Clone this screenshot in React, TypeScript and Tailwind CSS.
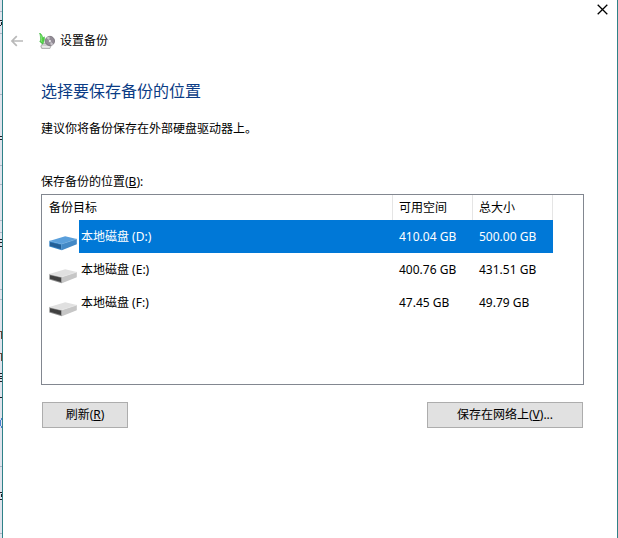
import { useState } from 'react';

// ── Data ───────────────────────────────────────────────────────────────────

type Drive = {
  id: string;
  name: string;
  free: string;
  total: string;
};

const DRIVES: Drive[] = [
  { id: 'D', name: '本地磁盘 (D:)', free: '410.04 GB', total: '500.00 GB' },
  { id: 'E', name: '本地磁盘 (E:)', free: '400.76 GB', total: '431.51 GB' },
  { id: 'F', name: '本地磁盘 (F:)', free: '47.45 GB', total: '49.79 GB' },
];

// ── Icons ──────────────────────────────────────────────────────────────────

function BackIcon() {
  return (
    <svg width="13" height="12" viewBox="0 0 13 12" fill="none" stroke="#b9b9b9" strokeWidth="1.7" aria-hidden="true">
      <path d="M12 6H1M5.8 1.2L1 6l4.8 4.8" />
    </svg>
  );
}

function CloseIcon() {
  return (
    <svg width="11" height="11" viewBox="0 0 11 11" fill="none" stroke="#000" strokeWidth="1.3" aria-hidden="true">
      <path d="M0.7 0.7l9.6 9.6M10.3 0.7L0.7 10.3" />
    </svg>
  );
}

function BackupIcon() {
  return (
    <svg width="16" height="16" viewBox="0 0 16 16" aria-hidden="true">
      <path d="M1.8 13.2l2-3h5l3 3-1 2.4H2.8z" fill="#cfcfcf" stroke="#8a8a8a" strokeWidth="0.6" />
      <path d="M2.8 13.3h8v1.3H3.3z" fill="#f4f4f4" />
      <circle cx="10.9" cy="8" r="4.7" fill="#938c96" stroke="#6b656e" strokeWidth="0.7" />
      <path d="M10.9 8L7.4 5a5 5 0 0 1 3-1.6zM10.9 8l3.5 3.1a5 5 0 0 1-2.6 1.5z" fill="#c8c4ca" />
      <circle cx="10.9" cy="8" r="1.5" fill="#f0edf1" stroke="#77717a" strokeWidth="0.5" />
      <path d="M0.5 0c2 1 3 2.6 3.2 5l1.7-1.2c.3 3-.3 5.4-1.8 7.4L0.6 8.4l.9-.4C1.7 5 1.4 2.4 0.5 0z" fill="#4fd043" stroke="#2fae34" strokeWidth="0.5" />
      <path d="M1.6 1.8c1 2 1.2 4 .9 6.4l.9 1" fill="none" stroke="#9cf084" strokeWidth="0.7" />
    </svg>
  );
}

function DriveIcon({ selected }: { selected: boolean }) {
  const c = selected
    ? { top: '#5a9fdb', side: '#4489c6', front: '#3584c6', slot: '#245f96', edge: '#6dabdf' }
    : { top: '#e0e0e0', side: '#c6c6c6', front: '#8c8c8c', slot: '#404040', edge: '#ececec' };

  return (
    <svg width="28" height="15" viewBox="0 0 28 15" className="shrink-0" aria-hidden="true">
      <path d="M0.3 5L16.2 0.3 27.8 3 12.8 7.9z" fill={c.top} />
      <path d="M12.8 7.9L27.8 3v5.2L12.8 14.2z" fill={c.side} />
      <path d="M0.3 5l12.5 2.9v6.3L0.3 10.6z" fill={c.front} />
      <path d="M1 6.2l11 2.6v4.1L1 9.8z" fill={c.slot} />
      <path d="M0.5 5l12.3 2.9L27.6 3.1" fill="none" stroke={c.edge} strokeWidth="0.6" />
    </svg>
  );
}

// Sliver of the window that lies behind the dialog
function WindowBehind() {
  return (
    <svg width="2" height="538" viewBox="0 0 2 538" className="w-[2px] shrink-0" shapeRendering="crispEdges" aria-hidden="true">
      <path d="M0 11h2v1H0zM0 33h2v1H0zM0 94h2v1H0zM0 165h2v1H0zM0 184h2v1H0zM0 220h2v1H0zM0 232h2v1H0zM0 289h2v1H0zM0 299h2v1H0zM0 466h2v1H0zM0 533h2v1H0z" fill="#aeb4c4" />
      <path d="M0 20h2v1H0zM1 22h1v3H1zM0 25h1v1H0zM0 136h2v1H0zM0 139h2v1H0zM0 239h2v1H0zM0 242h2v1H0zM0 246h2v1H0zM0 373h2v1H0zM0 376h2v1H0zM0 378h2v1H0zM0 381h2v1H0zM0 397h2v1H0zM0 492h2v1H0zM1 494h1v3H1zM0 499h2v1H0z" fill="#1d1d24" />
      <path d="M0 331h2v1H0zM1 332h1v7H1zM0 353h2v1H0zM1 354h1v7H1z" fill="#6b4636" />
      <path d="M1 418h1v2H1zM0 420h1v6H0zM1 426h1v2H1z" fill="#4a7fd0" />
    </svg>
  );
}

// ── Drive list ─────────────────────────────────────────────────────────────

function DriveList() {
  const [selectedId, setSelectedId] = useState('D');

  return (
    <div className="min-h-[191px] border border-[#828790] bg-white">
      <table aria-labelledby="drives-label" className="w-full table-fixed border-separate border-spacing-0 text-left">
        <colgroup>
          <col />
          <col className="w-[80px]" />
          <col className="w-[80px]" />
          <col className="w-[30px]" />
        </colgroup>
        <thead>
          <tr className="h-[25px]">
            <th className="border-r border-[#e5e5e5] p-0 pl-[7px] font-normal">备份目标</th>
            <th className="border-r border-[#e5e5e5] p-0 pl-[6px] font-normal">可用空间</th>
            <th className="border-r border-[#e5e5e5] p-0 pl-[6px] font-normal">总大小</th>
            <td />
          </tr>
        </thead>
        <tbody>
          {DRIVES.map((drive) => {
            const selected = drive.id === selectedId;
            const fill = selected ? 'bg-[#0078d7] text-white' : '';

            return (
              <tr
                key={drive.id}
                onClick={() => setSelectedId(drive.id)}
                aria-selected={selected}
                className="h-[33px] cursor-default"
              >
                <td className="p-0">
                  <div className="flex h-[33px]">
                    <span className="flex w-[37px] shrink-0 items-end pb-[2px] pl-[7px]">
                      <DriveIcon selected={selected} />
                    </span>
                    <span className={`flex flex-1 items-center pl-[2px] ${fill}`}>{drive.name}</span>
                  </div>
                </td>
                <td className={`p-0 pl-[6px] ${fill}`}>{drive.free}</td>
                <td className={`p-0 pl-[6px] ${fill}`}>{drive.total}</td>
                <td />
              </tr>
            );
          })}
        </tbody>
      </table>
    </div>
  );
}

// ── Dialog ─────────────────────────────────────────────────────────────────

export default function App() {
  return (
    <div className="flex min-h-screen bg-[#e1e3ed] font-['Noto_Sans','Noto_Sans_CJK_SC',sans-serif] text-[12px] leading-[18px] text-black">
      <WindowBehind />

      <div className="min-w-0 flex-1 border-x border-[#2f8288] bg-white">
        <div className="flex justify-end pt-[4px] pr-[9px]">
          <button type="button" aria-label="关闭" className="flex h-[11px] w-[11px]">
            <CloseIcon />
          </button>
        </div>

        <header className="flex items-center pt-[17px] pl-[8px]">
          <button type="button" aria-label="返回" disabled>
            <BackIcon />
          </button>
          <span className="ml-[15px] flex items-center gap-[5px]">
            <BackupIcon />
            设置备份
          </span>
        </header>

        <main className="pt-[29px] pr-[33px] pl-[38px]">
          <h1 className="text-[16px] leading-[24px] text-[#0b3c85]">选择要保存备份的位置</h1>
          <p className="mt-[17px]">建议你将备份保存在外部硬盘驱动器上。</p>

          <div id="drives-label" className="mt-[35px] mb-[3px]">
            保存备份的位置(<u>B</u>):
          </div>
          <DriveList />

          <div className="mt-[17px] flex justify-between px-px">
            <button type="button" className="h-[26px] w-[86px] border border-[#adadad] bg-[#e1e1e1]">
              刷新(<u>R</u>)
            </button>
            <button type="button" className="h-[26px] w-[156px] border border-[#adadad] bg-[#e1e1e1]">
              保存在网络上(<u>V</u>)...
            </button>
          </div>
        </main>
      </div>
    </div>
  );
}
